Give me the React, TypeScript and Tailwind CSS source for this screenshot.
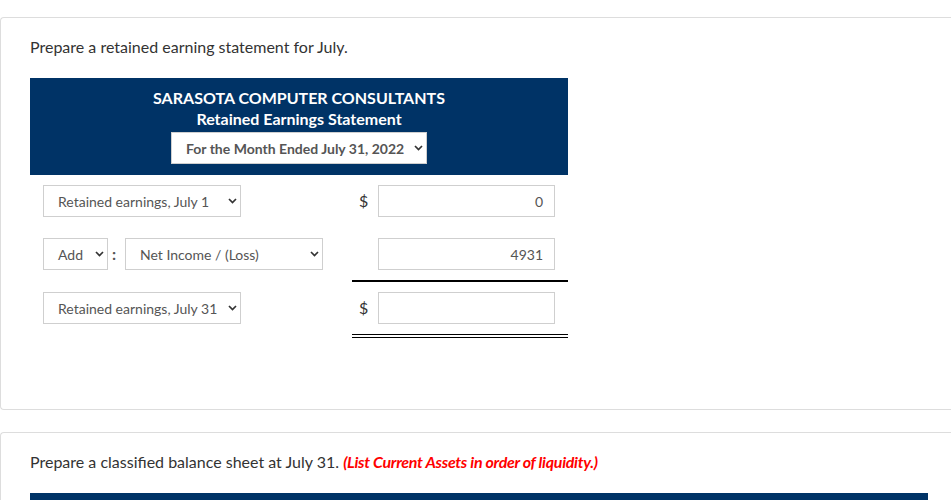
import { ReactNode } from 'react'

function Chevron() {
  return (
    <svg width="9" height="6" viewBox="0 0 9 6" className="shrink-0">
      <path d="M1 1 L4.5 4.5 L8 1" fill="none" stroke="#333" strokeWidth="1.7" />
    </svg>
  )
}

function Select({ label, className, bold }: { label: string; className: string; bold?: boolean }) {
  return (
    <div
      className={`flex h-[32px] items-center justify-between border border-[#cfcfcf] bg-white pl-[14px] pr-[3px] text-[14px] text-[#555] ${bold ? 'font-bold' : ''} ${className}`}
    >
      <span className="whitespace-nowrap">{label}</span>
      <Chevron />
    </div>
  )
}

function Amount({ value, dollar }: { value?: string; dollar?: boolean }) {
  return (
    <div className="flex items-center">
      <span className="w-[26px] pl-[7px] text-[16px] text-[#333]">{dollar ? '$' : ''}</span>
      <div className="flex h-[32px] w-[177px] items-center justify-end border border-[#cfcfcf] bg-white pr-[11px] text-[14px] text-[#555]">
        {value}
      </div>
    </div>
  )
}

function Row({ left, right }: { left: ReactNode; right: ReactNode }) {
  return (
    <div className="flex items-center">
      <div className="flex flex-1 items-center pl-[13px]">{left}</div>
      <div className="w-[216px]">{right}</div>
    </div>
  )
}

export default function App() {
  return (
    <div className="h-screen overflow-hidden bg-white pt-[17px] font-['Lato','Liberation_Sans',sans-serif] text-[#333]">
      {/* retained earnings card */}
      <div className="h-[393px] rounded-l-[4px] border-y border-l border-[#dddddd] pl-[29px] pt-[18px]">
        <p className="text-[16px] leading-[22px]">Prepare a retained earning statement for July.</p>

        <div className="mt-[20px] w-[538px]">
          <div className="flex flex-col items-center bg-[#003366] pb-[11px] pt-[9px] text-white">
            <div className="text-[16px] font-bold leading-[21px]">SARASOTA COMPUTER CONSULTANTS</div>
            <div className="text-[16px] font-bold leading-[21px]">Retained Earnings Statement</div>
            <Select label="For the Month Ended July 31, 2022" bold className="mt-[3px] h-[31px] w-[256px]" />
          </div>

          <div className="mt-[10px]">
            <Row left={<Select label="Retained earnings, July 1" className="w-[198px]" />} right={<Amount value="0" dollar />} />
          </div>
          <div className="mt-[21px]">
            <Row
              left={
                <>
                  <Select label="Add" className="w-[65px]" />
                  <span className="w-[17px] pl-[4px] text-[16px] font-bold text-[#555]">:</span>
                  <Select label="Net Income / (Loss)" className="w-[198px]" />
                </>
              }
              right={<Amount value="4931" />}
            />
          </div>
          <div className="ml-auto mt-[10px] h-[2px] w-[216px] bg-black" />
          <div className="mt-[10px]">
            <Row left={<Select label="Retained earnings, July 31" className="w-[198px]" />} right={<Amount dollar />} />
          </div>
          <div className="ml-auto mt-[10px] h-[4px] w-[216px] border-y border-black" />
        </div>
      </div>

      {/* balance sheet card */}
      <div className="mt-[22px] h-[100px] rounded-l-[4px] border-y border-l border-[#dddddd] pl-[29px] pt-[18px]">
        <p className="text-[16px] leading-[22px]">
          Prepare a classified balance sheet at July 31.{' '}
          <span className="font-bold italic tracking-[-0.3px] text-[#ff0000]">(List Current Assets in order of liquidity.)</span>
        </p>
        <div className="mt-[20px] h-[20px] w-[898px] bg-[#003366]" />
      </div>
    </div>
  )
}
